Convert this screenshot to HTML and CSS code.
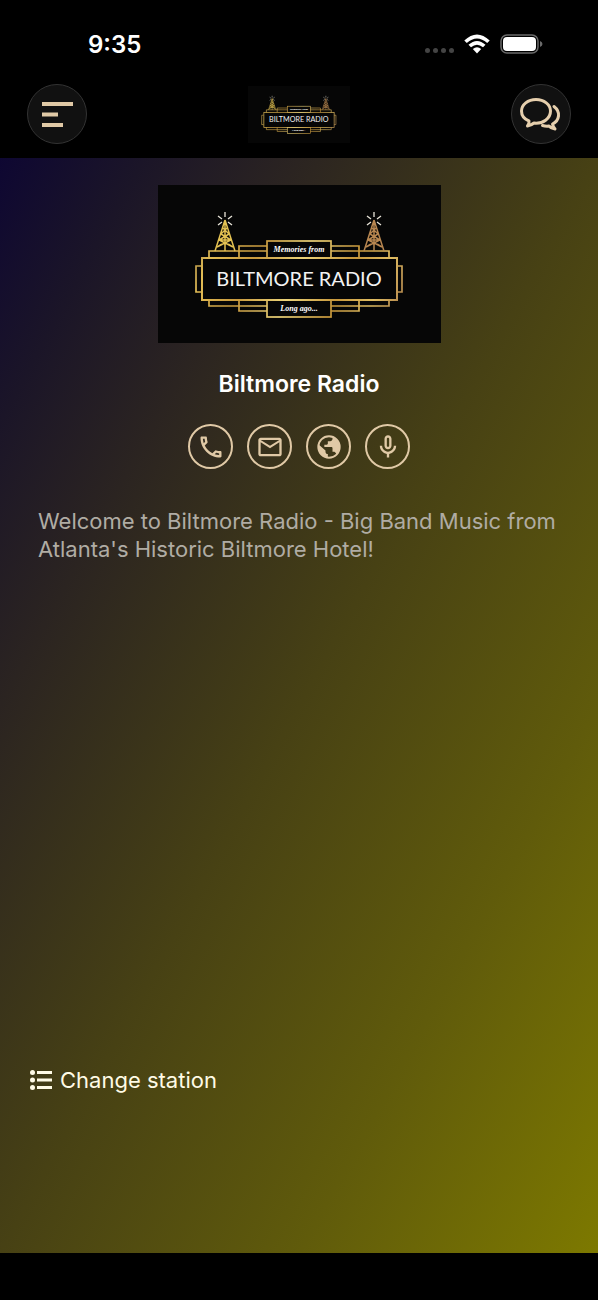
FILE: index.html
```html
<!DOCTYPE html>
<html lang="en">
<head>
    <meta charset="UTF-8">
    <meta name="viewport" content="width=device-width, initial-scale=1.0">
    <title>Biltmore Radio</title>
    <link rel="stylesheet" href="styles.css">
</head>
<body>

    <!-- logo, used in the header and on the station card -->
    <svg class="symbols" width="0" height="0" aria-hidden="true">
        <defs>
            <linearGradient id="gold" gradientUnits="userSpaceOnUse" x1="36" y1="40" x2="246" y2="130">
                <stop offset="0" stop-color="#8f7440"/>
                <stop offset="0.12" stop-color="#e3bd55"/>
                <stop offset="0.3" stop-color="#c99a3e"/>
                <stop offset="0.5" stop-color="#ecd47a"/>
                <stop offset="0.7" stop-color="#c8983c"/>
                <stop offset="0.85" stop-color="#e0bd62"/>
                <stop offset="1" stop-color="#a97a48"/>
            </linearGradient>
            <g id="tower" fill="none">
                <path d="M0 0 L-10 31 M0 0 L10 31 M0 0 V31 M-2 8 L4 14 L-6 20 L8 27 M2 8 L-4 14 L6 20 L-8 27 M-6 20 H6 M-8 27 Q0 20 8 27" stroke-width="1.5"/>
                <path d="M0 -3 V-8 M-3 -1 L-7 -4 M3 -1 L7 -4 M-3 2 L-7 5 M3 2 L7 5" stroke="#e8e4d8" stroke-width="1.3"/>
            </g>
            <symbol id="logo" viewBox="0 0 283 158">
                <g fill="none" stroke="url(#gold)" stroke-width="1.7">
                    <path d="M43 81 H38 V107 H43 M239 81 H244 V107 H239"/>
                    <path d="M51 73 V66 H109 M173 66 H231 V73 M51 115 V121 H109 M173 121 H231 V115"/>
                    <path d="M81 73 V61 H109 M173 61 H201 V73 M81 115 V126 H109 M173 126 H201 V115"/>
                    <rect x="109" y="56" width="64" height="17"/>
                    <rect x="109" y="115" width="64" height="17"/>
                    <rect x="44" y="73" width="195" height="42" stroke-width="2"/>
                </g>
                <use href="#tower" x="67" y="35" stroke="#e3c152"/>
                <use href="#tower" x="216" y="35" stroke="#b78650"/>
                <text class="logo-script" x="141" y="67">Memories from</text>
                <text class="logo-name" x="141" y="101">BILTMORE RADIO</text>
                <text class="logo-script" x="141" y="126">Long ago...</text>
            </symbol>
        </defs>
    </svg>

    <header class="top">
        <div class="status">
            <span class="time">9:35</span>
            <div class="signals">
                <div class="dots"><i></i><i></i><i></i><i></i></div>
                <svg width="26" height="20" viewBox="0 0 26 20" fill="#fff">
                    <path d="M0.3 6.6 Q13 -5.4 25.7 6.6 L23.2 9.1 Q13 -0.2 2.8 9.1 Z"/>
                    <path d="M4.5 10.8 Q13 3.2 21.5 10.8 L19 13.3 Q13 8.2 7 13.3 Z"/>
                    <path d="M8.8 15.1 Q13 11.5 17.2 15.1 L13 19.4 Z"/>
                </svg>
                <svg width="43" height="20" viewBox="0 0 43 20">
                    <rect x="1" y="1" width="37" height="18" rx="6" fill="none" stroke="#6a6a6a" stroke-width="1.5"/>
                    <rect x="3" y="3" width="33" height="14" rx="4" fill="#fff"/>
                    <path d="M40 7 Q42.5 8 42.5 10 Q42.5 12 40 13 Z" fill="#6a6a6a"/>
                </svg>
            </div>
        </div>
        <nav class="bar">
            <button class="round" aria-label="Menu">
                <svg width="58" height="58" viewBox="0 0 58 58" stroke="#e0c9a6" stroke-width="4">
                    <path d="M14 19 H45 M14 29.5 H30 M14 40 H35"/>
                </svg>
            </button>
            <svg class="small-logo" viewBox="0 0 283 158" role="img" aria-label="Biltmore Radio"><use href="#logo"/></svg>
            <button class="round" aria-label="Chat">
                <svg width="58" height="58" viewBox="0 0 58 58" fill="none" stroke="#e6cfad" stroke-width="3" stroke-linecap="round" stroke-linejoin="round">
                    <path d="M17 36 C12 34 9.5 30 9.5 26 C9.5 19.5 16 14.5 24 14.5 C32 14.5 38.5 19.5 38.5 26 C38.5 33.5 31 39 22 38 Q19 40.5 15.5 41 Q17.5 38.5 17 36 Z"/>
                    <path d="M42 21.5 C49 27 47.5 35.5 40.5 39 Q41 41.5 43 44 Q39 43.5 37 41 Q34 41.5 30.5 40.5"/>
                </svg>
            </button>
        </nav>
    </header>

    <main class="station">
        <svg class="cover" viewBox="0 0 283 158" role="img" aria-label="Biltmore Radio"><use href="#logo"/></svg>
        <h1>Biltmore Radio</h1>
        <div class="contacts">
            <a href="#phone" aria-label="Phone">
                <svg viewBox="0 0 24 24"><path d="M6.54 5c.06.89.21 1.76.45 2.59l-1.2 1.2c-.41-1.2-.67-2.47-.76-3.79h1.51m9.86 12.02c.85.24 1.72.39 2.6.45v1.49c-1.32-.09-2.59-.35-3.8-.75l1.2-1.19M7.5 3H4c-.55 0-1 .45-1 1 0 9.39 7.61 17 17 17 .55 0 1-.45 1-1v-3.49c0-.55-.45-1-1-1-1.24 0-2.45-.2-3.57-.57a1.02 1.02 0 0 0-1.02.24l-2.2 2.2a15.07 15.07 0 0 1-6.59-6.59l2.2-2.2c.28-.28.36-.67.25-1.02A11.36 11.36 0 0 1 8.5 4c0-.55-.45-1-1-1z"/></svg>
            </a>
            <a href="#mail" aria-label="Email">
                <svg viewBox="0 0 24 24"><path d="M22 6c0-1.1-.9-2-2-2H4c-1.1 0-2 .9-2 2v12c0 1.1.9 2 2 2h16c1.1 0 2-.9 2-2V6zm-2 0l-8 5-8-5h16zm0 12H4V8l8 5 8-5v10z"/></svg>
            </a>
            <a href="#web" aria-label="Website">
                <svg viewBox="0 0 24 24">
                    <circle cx="12" cy="12" r="9.2" fill="none" stroke="#e0c9a6" stroke-width="1.6"/>
                    <path d="M3.6 10.2 L9 15 V16 C9 17.1 9.9 18 11 18 V21 C6 20.5 3 16.5 3 12 Z"/>
                    <path d="M17.9 17.4 C17.6 16.6 16.9 16 16 16 H15 V13 C15 12.4 14.6 12 14 12 H8 V10 H10 C10.6 10 11 9.6 11 9 V7 H13 C14.1 7 15 6.1 15 5 V3.6 C19 5 21 8.5 21 12 C21 14.5 20 16.5 18.5 18.5 Z"/>
                </svg>
            </a>
            <a href="#voice" aria-label="Voice message">
                <svg viewBox="0 0 24 24"><path d="M12 14c1.66 0 3-1.34 3-3V5c0-1.66-1.34-3-3-3S9 3.34 9 5v6c0 1.66 1.34 3 3 3zm-1-9c0-.55.45-1 1-1s1 .45 1 1v6c0 .55-.45 1-1 1s-1-.45-1-1V5zm6 6c0 2.76-2.24 5-5 5s-5-2.24-5-5H5c0 3.53 2.61 6.43 6 6.92V21h2v-3.08c3.39-.49 6-3.39 6-6.92h-2z"/></svg>
            </a>
        </div>
        <p class="welcome">Welcome to Biltmore Radio - Big Band Music from Atlanta's Historic Biltmore Hotel!</p>
        <button class="change">
            <svg width="22" height="20" viewBox="0 0 22 20" fill="#fffbe6">
                <circle cx="2.5" cy="2.5" r="2.5"/><rect x="7" y="1" width="15" height="3"/>
                <circle cx="2.5" cy="10" r="2.5"/><rect x="7" y="8.5" width="15" height="3"/>
                <circle cx="2.5" cy="17.5" r="2.5"/><rect x="7" y="16" width="15" height="3"/>
            </svg>
            Change station
        </button>
    </main>

</body>
</html>
```

FILE: styles.css
```css
*{
    padding: 0;
    margin: 0;
    box-sizing: border-box;
}
body{
    display: flex;
    flex-direction: column;
    min-height: 100vh;
    padding-bottom: 47px;
    background: #000;
    color: #fff;
    font-family: Inter, "Liberation Sans", sans-serif;
}
button{
    border: none;
    background: none;
    color: inherit;
    font: inherit;
    cursor: pointer;
}
svg{
    display: block;
}
.symbols{
    position: absolute;
}

/* header */
.top{
    padding-top: 30px;
}
.status{
    display: flex;
    justify-content: space-between;
    align-items: center;
    height: 28px;
    padding: 0 55px 0 88px;
}
.time{
    font-size: 24px;
    font-weight: 600;
}
.signals{
    display: flex;
    align-items: center;
    gap: 10px;
}
.dots{
    display: flex;
    gap: 3px;
    padding-top: 12px;
}
.dots i{
    width: 5px;
    height: 5px;
    border-radius: 50%;
    background: #444;
}
.bar{
    display: flex;
    justify-content: space-between;
    align-items: center;
    padding: 26px 27px 14px;
}
.round{
    width: 60px;
    height: 60px;
    border: 1px solid #333;
    border-radius: 50%;
    background: #111;
}
.small-logo{
    width: 102px;
    height: 57px;
    background: #060606;
}
.logo-name{
    fill: #f2f2f2;
    font-family: Lato, sans-serif;
    font-size: 20px;
    text-anchor: middle;
}
.logo-script{
    fill: #fff;
    font-family: "Liberation Serif", serif;
    font-size: 8px;
    font-style: italic;
    font-weight: bold;
    text-anchor: middle;
}

/* station */
.station{
    display: flex;
    flex: 1;
    flex-direction: column;
    align-items: center;
    padding: 27px 28px 158px;
    background: linear-gradient(to bottom right, #0e0732, #1b1528 12%, #2b2421 25%, #474114 50%, #605b0b 75%, #7d7900);
}
.cover{
    width: 283px;
    height: 158px;
    background: #060606;
}
h1{
    margin-top: 26px;
    font-size: 23px;
    font-weight: 600;
    line-height: 30px;
}
.contacts{
    display: flex;
    gap: 14px;
    margin-top: 25px;
}
.contacts a{
    display: grid;
    place-items: center;
    width: 45px;
    height: 45px;
    border: 2px solid #e0c9a6;
    border-radius: 50%;
}
.contacts svg{
    width: 28px;
    height: 28px;
    fill: #e0c9a6;
}
.welcome{
    align-self: stretch;
    margin-top: 38px;
    padding: 0 10px;
    color: #b0aca4;
    font-size: 22px;
    line-height: 28px;
}
.change{
    display: flex;
    align-self: flex-start;
    align-items: center;
    gap: 8px;
    margin-top: auto;
    padding-left: 2px;
    color: #fffbe6;
    font-size: 22px;
    line-height: 30px;
}
```
